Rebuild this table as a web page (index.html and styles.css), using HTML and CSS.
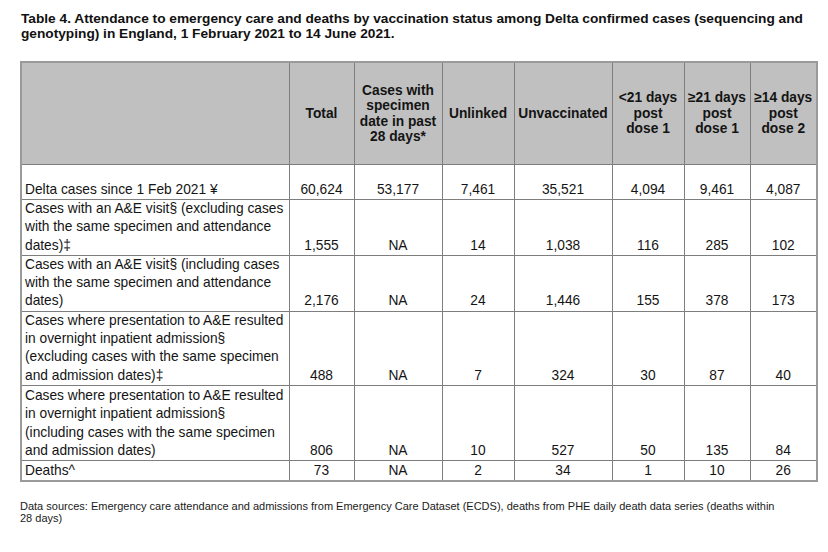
FILE: index.html
```html
<!DOCTYPE html>
<html lang="en">
<head>
<meta charset="utf-8">
<title>Table 4</title>
<link rel="stylesheet" href="styles.css">
</head>
<body>
<div class="page">
  <h1 class="title">Table 4. Attendance to emergency care and deaths by vaccination status among Delta confirmed cases (sequencing and genotyping) in England, 1 February 2021 to 14 June 2021.</h1>
  <table class="data">
    <colgroup>
      <col class="c-label"><col class="c-total"><col class="c-spec"><col class="c-unl"><col class="c-unv"><col class="c-lt21"><col class="c-ge21"><col class="c-ge14">
    </colgroup>
    <thead>
      <tr class="head">
        <th></th>
        <th>Total</th>
        <th>Cases with<br>specimen<br>date in past<br>28 days*</th>
        <th>Unlinked</th>
        <th>Unvaccinated</th>
        <th>&lt;21 days<br>post<br>dose 1</th>
        <th>≥21 days<br>post<br>dose 1</th>
        <th>≥14 days<br>post<br>dose 2</th>
      </tr>
    </thead>
    <tbody>
      <tr class="r-first">
        <td class="lbl">Delta cases since 1 Feb 2021 ¥</td>
        <td>60,624</td><td>53,177</td><td>7,461</td><td>35,521</td><td>4,094</td><td>9,461</td><td>4,087</td>
      </tr>
      <tr>
        <td class="lbl">Cases with an A&amp;E visit§ (excluding cases with the same specimen and attendance dates)‡</td>
        <td>1,555</td><td>NA</td><td>14</td><td>1,038</td><td>116</td><td>285</td><td>102</td>
      </tr>
      <tr>
        <td class="lbl">Cases with an A&amp;E visit§ (including cases with the same specimen and attendance dates)</td>
        <td>2,176</td><td>NA</td><td>24</td><td>1,446</td><td>155</td><td>378</td><td>173</td>
      </tr>
      <tr>
        <td class="lbl">Cases where presentation to A&amp;E resulted in overnight inpatient admission§ (excluding cases with the same specimen and admission dates)‡</td>
        <td>488</td><td>NA</td><td>7</td><td>324</td><td>30</td><td>87</td><td>40</td>
      </tr>
      <tr class="r-tall">
        <td class="lbl">Cases where presentation to A&amp;E resulted in overnight inpatient admission§ (including cases with the same specimen and admission dates)</td>
        <td>806</td><td>NA</td><td>10</td><td>527</td><td>50</td><td>135</td><td>84</td>
      </tr>
      <tr class="r-last">
        <td class="lbl">Deaths^</td>
        <td>73</td><td>NA</td><td>2</td><td>34</td><td>1</td><td>10</td><td>26</td>
      </tr>
    </tbody>
  </table>
  <p class="note">Data sources: Emergency care attendance and admissions from Emergency Care Dataset (ECDS), deaths from PHE daily death data series (deaths within 28 days)</p>
</div>
</body>
</html>
```

FILE: styles.css
```css
html, body {
  margin: 0;
  padding: 0;
  background: #ffffff;
}

body {
  font-family: "Liberation Sans", Arial, sans-serif;
  color: #141414;
}

.page {
  padding: 12px 12px 0 20px;
}

.title {
  margin: 0 0 20px 1px;
  font-size: 13.7px;
  line-height: 14.5px;
  font-weight: bold;
  color: #111111;
  width: 800px;
}

.data {
  border-collapse: collapse;
  table-layout: fixed;
  width: 796px;
  font-size: 13.75px;
  line-height: 18.3px;
  border: 2px solid #9a9a9a;
}

.c-label { width: 268px; }
.c-total { width: 65px; }
.c-spec { width: 88px; }
.c-unl { width: 72px; }
.c-unv { width: 98px; }
.c-lt21 { width: 72px; }
.c-ge21 { width: 66px; }
.c-ge14 { width: 67px; }

.data th,
.data td {
  border: 1px solid #7e7e7e;
  padding: 0;
}

.head th {
  background: #c0c0c0;
  height: 101px;
  font-weight: bold;
  line-height: 15.5px;
  text-align: center;
  vertical-align: middle;
  padding: 0 2px;
  color: #141414;
}

.data td {
  text-align: center;
  vertical-align: bottom;
}

.data td.lbl {
  text-align: left;
  padding-left: 3px;
  padding-right: 2px;
}

.r-first td {
  height: 34px;
}

.r-tall td {
  padding-top: 1px;
}

.r-last td {
  height: 19px;
}

.note {
  margin: 18px 0 0 0;
  font-size: 11px;
  line-height: 12.3px;
  color: #1a1a1a;
  width: 758px;
}
```
